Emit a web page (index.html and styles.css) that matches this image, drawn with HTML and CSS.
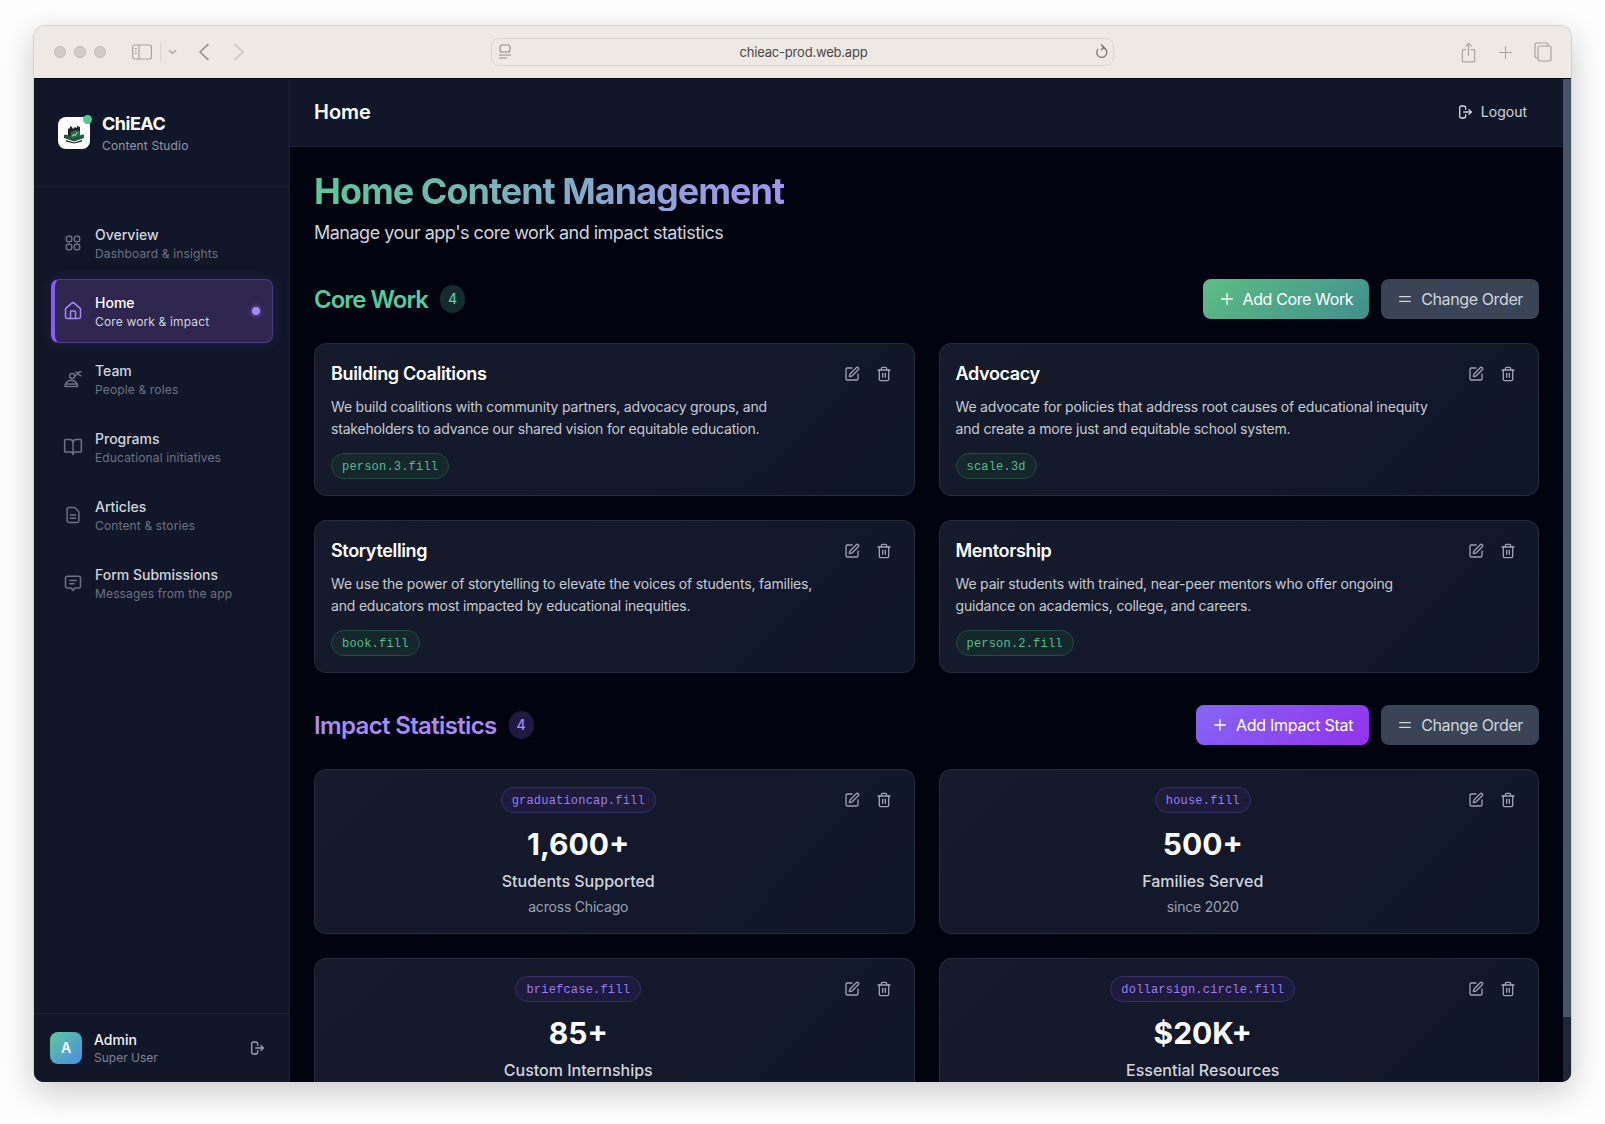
FILE: index.html
```html
<!DOCTYPE html>
<html>
<head>
<title>ChiEAC Content Studio</title>
<meta charset="UTF-8">
<link rel="stylesheet" href="styles.css">
</head>
<body>

<svg class="sprite" xmlns="http://www.w3.org/2000/svg">
	<symbol id="i-edit" viewBox="0 0 24 24"><path d="M12 3H5a2 2 0 0 0-2 2v14a2 2 0 0 0 2 2h14a2 2 0 0 0 2-2v-7"/><path d="M18.375 2.625a1 1 0 0 1 3 3l-9.013 9.014a2 2 0 0 1-.853.505l-2.873.84a.5.5 0 0 1-.62-.62l.84-2.873a2 2 0 0 1 .506-.852z"/></symbol>
	<symbol id="i-trash" viewBox="0 0 24 24"><path d="M3 6h18"/><path d="M19 6v14c0 1-1 2-2 2H7c-1 0-2-1-2-2V6"/><path d="M8 6V4c0-1 1-2 2-2h4c1 0 2 1 2 2v2"/><path d="M10 11v6"/><path d="M14 11v6"/></symbol>
	<symbol id="i-grid" viewBox="0 0 24 24"><rect x="4" y="4" width="6.5" height="6.5" rx="2"/><rect x="13.5" y="4" width="6.5" height="6.5" rx="2"/><rect x="4" y="13.5" width="6.5" height="6.5" rx="2"/><rect x="13.5" y="13.5" width="6.5" height="6.5" rx="2"/></symbol>
	<symbol id="i-home" viewBox="0 0 24 24"><path d="M15 21v-8a1 1 0 0 0-1-1h-4a1 1 0 0 0-1 1v8"/><path d="M3 10a2 2 0 0 1 .709-1.528l7-5.999a2 2 0 0 1 2.582 0l7 5.999A2 2 0 0 1 21 10v9a2 2 0 0 1-2 2H5a2 2 0 0 1-2-2z"/></symbol>
	<symbol id="i-team" viewBox="0 0 24 24"><circle cx="11" cy="8.500" r="3"/><path d="M2.500 21c0-4.500 3.500-7.500 7.500-7.500s7.500 3 7.500 7.500z"/><path d="M3 18h14"/><path d="M14.500 8c2-.5 3-2 4-3.500.6-.9 1.500-1.300 3-1.300"/><path d="M15.500 4c1.500 0 2.500 1 3.500 2.500.7 1 1.500 1.500 2.500 1.500"/></symbol>
	<symbol id="i-book" viewBox="0 0 24 24"><path d="M12 7v14"/><path d="M3 18a1 1 0 0 1-1-1V4a1 1 0 0 1 1-1h5a4 4 0 0 1 4 4 4 4 0 0 1 4-4h5a1 1 0 0 1 1 1v13a1 1 0 0 1-1 1h-6a3 3 0 0 0-3 3 3 3 0 0 0-3-3z"/></symbol>
	<symbol id="i-file" viewBox="0 0 24 24"><path d="M14 3H7a2 2 0 0 0-2 2v14a2 2 0 0 0 2 2h10a2 2 0 0 0 2-2V8z"/><path d="M9 12h6"/><path d="M9 16h6"/></symbol>
	<symbol id="i-message" viewBox="0 0 24 24"><path d="M3 6a2 2 0 0 1 2-2h14a2 2 0 0 1 2 2v10a2 2 0 0 1-2 2h-5l-2 3-2-3H5a2 2 0 0 1-2-2z"/><path d="M8 9h8"/><path d="M8 13h5"/></symbol>
	<symbol id="i-logout" viewBox="0 0 24 24"><path d="M10 21H7a3 3 0 0 1-3-3V6a3 3 0 0 1 3-3h3a3 3 0 0 1 3 3v2"/><path d="M13 16v2a3 3 0 0 1-3 3"/><path d="M18 8.500l3.500 3.500-3.500 3.500"/><path d="M21 12H10"/></symbol>
	<symbol id="i-plus" viewBox="0 0 24 24"><path d="M12 4v16"/><path d="M4 12h16"/></symbol>
	<symbol id="i-order" viewBox="0 0 24 24"><path d="M4 8.500h16"/><path d="M4 15.500h16"/></symbol>
</svg>

<div class="window">

	<div class="toolbar">
		<div class="toolbar-left">
			<span class="light"></span><span class="light"></span><span class="light"></span>
			<svg class="tb-sidebar" viewBox="0 0 20 16"><rect x="0.600" y="1" width="18.800" height="14" rx="2"/><path d="M7 1v14"/><path d="M3 4.500h1.500M3 7h1.500M3 9.500h1.500"/></svg>
			<span class="tb-divider"></span>
			<svg class="tb-down" viewBox="0 0 10 6"><path d="M1.500 1.500 5 4.500l3.500-3"/></svg>
			<svg class="tb-back" viewBox="0 0 12 18"><path d="M10 1.500 2 9l8 7.500"/></svg>
			<svg class="tb-forward" viewBox="0 0 12 18"><path d="M2 1.500 10 9l-8 7.500"/></svg>
		</div>
		<div class="urlbar">
			<svg class="url-page" viewBox="0 0 14 16"><rect x="2" y="1" width="10" height="7" rx="2"/><path d="M1.500 11h11M1.500 14h7"/></svg>
			<span class="url-text">chieac-prod.web.app</span>
			<svg class="url-reload" viewBox="0 0 14 16"><path d="M8 3.500a5 5 0 1 1-5.300 2"/><path d="M6.500 .8 9 3.500 6.300 5.800"/></svg>
		</div>
		<div class="toolbar-right">
			<svg class="tb-share" viewBox="0 0 16 22"><path d="M5 8H2.500a1 1 0 0 0-1 1v11a1 1 0 0 0 1 1h11a1 1 0 0 0 1-1V9a1 1 0 0 0-1-1H11"/><path d="M8 14V1.500"/><path d="M5 4.200 8 1.200l3 3"/></svg>
			<svg class="tb-plus" viewBox="0 0 14 14"><path d="M7 0v14M0 7h14"/></svg>
			<svg class="tb-tabs" viewBox="0 0 18 20"><rect x="4" y="4" width="13" height="15" rx="2"/><path d="M4 16H3a2 2 0 0 1-2-2V3a2 2 0 0 1 2-2h9a2 2 0 0 1 2 2v1"/></svg>
		</div>
	</div>

	<div class="app">

		<aside class="sidebar">
			<div class="brand">
				<div class="logo">
					<svg viewBox="0 0 32 32">
						<path fill="#20232a" d="M10 21v-9l2-1v-2l2 1 1 2 2-2 2 1v-2l3 1v11z"/>
						<path fill="#2c6a4e" d="M12 21l1-6 4-2 5 1v7z"/>
						<path fill="#e8f0ea" d="M14 19l2-2 1 1 2-3 .6.6-2.500 3.400-1-1-1.500 1.500z"/>
						<path fill="#1f5a40" d="M6 18l2-.5 8 3.500 8-3.500 2 .5v3l-10 3.500-10-3.500z"/>
						<path fill="#17211d" d="M8 23l8 2.500 8-2.500v1.500l-8 2-8-2z"/>
					</svg>
					<span class="logo-dot"></span>
				</div>
				<div class="brand-text">
					<div class="brand-name">ChiEAC</div>
					<div class="brand-sub">Content Studio</div>
				</div>
			</div>

			<nav class="nav">
				<a class="nav-item">
					<svg class="nav-icon"><use href="#i-grid"/></svg>
					<div><div class="nav-title">Overview</div><div class="nav-sub">Dashboard &amp; insights</div></div>
				</a>
				<a class="nav-item active">
					<svg class="nav-icon"><use href="#i-home"/></svg>
					<div><div class="nav-title">Home</div><div class="nav-sub">Core work &amp; impact</div></div>
					<span class="nav-dot"></span>
				</a>
				<a class="nav-item">
					<svg class="nav-icon"><use href="#i-team"/></svg>
					<div><div class="nav-title">Team</div><div class="nav-sub">People &amp; roles</div></div>
				</a>
				<a class="nav-item">
					<svg class="nav-icon"><use href="#i-book"/></svg>
					<div><div class="nav-title">Programs</div><div class="nav-sub">Educational initiatives</div></div>
				</a>
				<a class="nav-item">
					<svg class="nav-icon"><use href="#i-file"/></svg>
					<div><div class="nav-title">Articles</div><div class="nav-sub">Content &amp; stories</div></div>
				</a>
				<a class="nav-item">
					<svg class="nav-icon"><use href="#i-message"/></svg>
					<div><div class="nav-title">Form Submissions</div><div class="nav-sub">Messages from the app</div></div>
				</a>
			</nav>

			<div class="user">
				<div class="avatar">A</div>
				<div class="user-text">
					<div class="user-name">Admin</div>
					<div class="user-role">Super User</div>
				</div>
				<svg class="user-logout"><use href="#i-logout"/></svg>
			</div>
		</aside>

		<div class="main">
			<header class="topbar">
				<h1 class="topbar-title">Home</h1>
				<button class="logout"><svg><use href="#i-logout"/></svg>Logout</button>
			</header>

			<div class="content">
				<div class="page-head">
					<h2 class="page-title">Home Content Management</h2>
					<p class="page-sub">Manage your app's core work and impact statistics</p>
				</div>

				<section class="section">
					<div class="section-head">
						<h3 class="section-title green">Core Work</h3>
						<span class="count green-count">4</span>
						<div class="section-buttons">
							<button class="btn btn-green"><svg><use href="#i-plus"/></svg>Add Core Work</button>
							<button class="btn btn-grey"><svg><use href="#i-order"/></svg>Change Order</button>
						</div>
					</div>
					<div class="card-grid">
						<div class="card">
							<div class="card-body">
								<div class="card-title">Building Coalitions</div>
								<p class="card-text">We build coalitions with community partners, advocacy groups, and stakeholders to advance our shared vision for equitable education.</p>
								<span class="tag tag-green">person.3.fill</span>
							</div>
							<div class="card-actions"><button><svg><use href="#i-edit"/></svg></button><button><svg><use href="#i-trash"/></svg></button></div>
						</div>
						<div class="card">
							<div class="card-body">
								<div class="card-title">Advocacy</div>
								<p class="card-text">We advocate for policies that address root causes of educational inequity and create a more just and equitable school system.</p>
								<span class="tag tag-green">scale.3d</span>
							</div>
							<div class="card-actions"><button><svg><use href="#i-edit"/></svg></button><button><svg><use href="#i-trash"/></svg></button></div>
						</div>
						<div class="card">
							<div class="card-body">
								<div class="card-title">Storytelling</div>
								<p class="card-text">We use the power of storytelling to elevate the voices of students, families, and educators most impacted by educational inequities.</p>
								<span class="tag tag-green">book.fill</span>
							</div>
							<div class="card-actions"><button><svg><use href="#i-edit"/></svg></button><button><svg><use href="#i-trash"/></svg></button></div>
						</div>
						<div class="card">
							<div class="card-body">
								<div class="card-title">Mentorship</div>
								<p class="card-text">We pair students with trained, near-peer mentors who offer ongoing guidance on academics, college, and careers.</p>
								<span class="tag tag-green">person.2.fill</span>
							</div>
							<div class="card-actions"><button><svg><use href="#i-edit"/></svg></button><button><svg><use href="#i-trash"/></svg></button></div>
						</div>
					</div>
				</section>

				<section class="section">
					<div class="section-head">
						<h3 class="section-title purple">Impact Statistics</h3>
						<span class="count purple-count">4</span>
						<div class="section-buttons">
							<button class="btn btn-purple"><svg><use href="#i-plus"/></svg>Add Impact Stat</button>
							<button class="btn btn-grey"><svg><use href="#i-order"/></svg>Change Order</button>
						</div>
					</div>
					<div class="card-grid">
						<div class="card">
							<div class="card-body stat">
								<span class="tag tag-purple">graduationcap.fill</span>
								<div class="stat-value">1,600+</div>
								<div class="stat-label">Students Supported</div>
								<div class="stat-note">across Chicago</div>
							</div>
							<div class="card-actions"><button><svg><use href="#i-edit"/></svg></button><button><svg><use href="#i-trash"/></svg></button></div>
						</div>
						<div class="card">
							<div class="card-body stat">
								<span class="tag tag-purple">house.fill</span>
								<div class="stat-value">500+</div>
								<div class="stat-label">Families Served</div>
								<div class="stat-note">since 2020</div>
							</div>
							<div class="card-actions"><button><svg><use href="#i-edit"/></svg></button><button><svg><use href="#i-trash"/></svg></button></div>
						</div>
						<div class="card">
							<div class="card-body stat">
								<span class="tag tag-purple">briefcase.fill</span>
								<div class="stat-value">85+</div>
								<div class="stat-label">Custom Internships</div>
							</div>
							<div class="card-actions"><button><svg><use href="#i-edit"/></svg></button><button><svg><use href="#i-trash"/></svg></button></div>
						</div>
						<div class="card">
							<div class="card-body stat">
								<span class="tag tag-purple">dollarsign.circle.fill</span>
								<div class="stat-value">$20K+</div>
								<div class="stat-label">Essential Resources</div>
							</div>
							<div class="card-actions"><button><svg><use href="#i-edit"/></svg></button><button><svg><use href="#i-trash"/></svg></button></div>
						</div>
					</div>
				</section>
			</div>
		</div>

		<div class="scrollbar"><div class="scroll-thumb"></div></div>
	</div>
</div>

</body>
</html>
```

FILE: styles.css
```css
html, body {
	height: 100%;
}

body {
	margin: 0;
	padding: 25px 33px 0 33px;
	box-sizing: border-box;
	background-color: #fdfdfd;
	font-family: "Inter", "Liberation Sans", sans-serif;
	overflow: hidden;
}

.sprite {
	display: none;
}

svg {
	fill: none;
	stroke: currentColor;
	stroke-width: 2;
	stroke-linecap: round;
	stroke-linejoin: round;
	flex-shrink: 0;
}

button {
	font-family: inherit;
	border: 0;
	background: none;
	cursor: pointer;
}

h1, h2, h3, p {
	margin: 0;
}

/* browser window */

.window {
	display: flex;
	flex-direction: column;
	height: 1056px;
	border: 1px solid #d3cfcb;
	border-bottom: 0;
	border-radius: 12px 12px 10px 10px;
	overflow: hidden;
	box-shadow: 0 10px 32px rgba(0, 0, 0, 0.2);
}

.toolbar {
	display: grid;
	grid-template-columns: 1fr 623px 1fr;
	align-items: center;
	height: 52px;
	flex-shrink: 0;
	background-color: #eee9e5;
	border-bottom: 1px solid #08090d;
	color: #a9a5a1;
}

.toolbar-left {
	display: flex;
	align-items: center;
	padding-left: 20px;
}

.light {
	width: 12px;
	height: 12px;
	box-sizing: border-box;
	margin-right: 8px;
	border-radius: 50%;
	background-color: #d0ccc8;
	border: 1px solid #bdb9b5;
}

.tb-sidebar {
	width: 20px;
	height: 16px;
	margin-left: 18px;
	stroke-width: 1.2;
}

.tb-divider {
	width: 1px;
	height: 18px;
	margin-left: 8px;
	background-color: #d8d4d0;
}

.tb-down {
	width: 9px;
	height: 6px;
	margin-left: 7px;
	stroke-width: 1.5;
}

.tb-back {
	width: 12px;
	height: 18px;
	margin-left: 21px;
	stroke-width: 1.6;
	color: #8f8b87;
}

.tb-forward {
	width: 12px;
	height: 18px;
	margin-left: 23px;
	stroke-width: 1.6;
	color: #c9c5c1;
}

.urlbar {
	display: flex;
	align-items: center;
	justify-content: space-between;
	height: 28px;
	box-sizing: border-box;
	padding: 0 4px 0 6px;
	border: 1px solid #d8d4d0;
	border-radius: 8px;
	background-color: #eee9e5;
}

.url-page {
	width: 14px;
	height: 16px;
	stroke-width: 1.1;
	color: #8f8b87;
}

.url-text {
	font-size: 13px;
	letter-spacing: -0.2px;
	color: #4b4845;
}

.url-reload {
	width: 14px;
	height: 16px;
	stroke-width: 1.3;
	color: #77736f;
}

.toolbar-right {
	display: flex;
	align-items: center;
	justify-content: flex-end;
	padding-right: 19px;
}

.tb-share {
	width: 15px;
	height: 21px;
	stroke-width: 1.3;
}

.tb-plus {
	width: 13px;
	height: 13px;
	margin-left: 23px;
	stroke-width: 1.2;
}

.tb-tabs {
	width: 18px;
	height: 20px;
	margin-left: 22px;
	stroke-width: 1.2;
}

/* app */

.app {
	display: flex;
	flex: 1;
	min-height: 0;
	background-color: #01030f;
}

.sidebar {
	display: flex;
	flex-direction: column;
	width: 256px;
	box-sizing: border-box;
	flex-shrink: 0;
	background-color: #111729;
	border-right: 1px solid #1d2333;
}

.brand {
	display: flex;
	align-items: center;
	gap: 12px;
	height: 108px;
	box-sizing: border-box;
	flex-shrink: 0;
	padding: 0 24px;
	border-bottom: 1px solid #1b2132;
}

.logo {
	position: relative;
	width: 32px;
	height: 32px;
	border-radius: 8px;
	background-color: #fff;
}

.logo svg {
	display: block;
	width: 32px;
	height: 32px;
	stroke: none;
}

.logo-dot {
	position: absolute;
	top: -2px;
	right: -2px;
	width: 9px;
	height: 9px;
	border-radius: 50%;
	background-color: #52c994;
}

.brand-text {
	margin-top: 1px;
}

.brand-name {
	font-size: 18px;
	line-height: 24px;
	font-weight: 700;
	letter-spacing: -0.5px;
	color: #fff;
}

.brand-sub {
	margin-top: 2px;
	font-size: 12px;
	line-height: 16px;
	letter-spacing: 0.15px;
	color: #9097a6;
}

.nav {
	display: flex;
	flex-direction: column;
	flex: 1;
	gap: 4px;
	padding: 24px 16px 0 17px;
}

.nav-item {
	display: flex;
	align-items: center;
	gap: 12px;
	height: 64px;
	box-sizing: border-box;
	flex-shrink: 0;
	padding: 0 16px 0 12px;
	border-radius: 8px;
}

.nav-icon {
	width: 20px;
	height: 20px;
	stroke-width: 1.8;
	color: #6b7280;
}

.nav-title {
	font-size: 14px;
	line-height: 20px;
	font-weight: 500;
	color: #d1d5db;
}

.nav-sub {
	margin-top: 1px;
	font-size: 12px;
	line-height: 16px;
	letter-spacing: 0.15px;
	color: #6b7280;
}

.nav-item.active {
	background-color: #2f2650;
	border: 1px solid #4b3a85;
	border-left: 4px solid #8b5cf6;
	padding-left: 8px;
	padding-right: 12px;
	box-shadow: 0 0 14px rgba(139, 92, 246, 0.14);
}

.active .nav-icon {
	color: #a78bfa;
}

.active .nav-title {
	color: #fff;
}

.active .nav-sub {
	color: #d1d5db;
}

.nav-dot {
	width: 8px;
	height: 8px;
	margin-left: auto;
	border-radius: 50%;
	background-color: #a78bfa;
	box-shadow: 0 0 5px rgba(167, 139, 250, 0.7);
}

.user {
	display: flex;
	align-items: center;
	gap: 12px;
	height: 69px;
	box-sizing: border-box;
	flex-shrink: 0;
	padding: 0 24px 0 16px;
	border-top: 1px solid #1d2333;
}

.avatar {
	width: 32px;
	height: 32px;
	border-radius: 8px;
	background: linear-gradient(135deg, #5fc69a, #4a8ee6);
	color: #fff;
	font-size: 14px;
	font-weight: 600;
	line-height: 32px;
	text-align: center;
}

.user-text {
	flex: 1;
}

.user-name {
	font-size: 14px;
	line-height: 20px;
	font-weight: 500;
	color: #f3f4f6;
}

.user-role {
	font-size: 12px;
	line-height: 16px;
	color: #7c8393;
}

.user-logout {
	width: 16px;
	height: 16px;
	color: #9ca3af;
}

/* main column */

.main {
	display: flex;
	flex-direction: column;
	flex: 1;
	min-width: 0;
}

.topbar {
	display: flex;
	align-items: center;
	justify-content: space-between;
	height: 68px;
	box-sizing: border-box;
	flex-shrink: 0;
	padding: 0 24px 2px 24px;
	background-color: #111729;
	border-bottom: 1px solid #1d2333;
}

.topbar-title {
	font-size: 20px;
	font-weight: 600;
	color: #fff;
}

.logout {
	display: flex;
	align-items: center;
	gap: 8px;
	padding: 8px 12px;
	font-size: 14px;
	line-height: 20px;
	color: #d1d5db;
}

.logout svg {
	width: 16px;
	height: 16px;
}

.content {
	flex: 1;
	min-height: 0;
	padding: 24px 24px 0 24px;
	overflow: hidden;
}

.page-head {
	margin-bottom: 32px;
}

.page-title {
	display: inline-block;
	font-size: 36px;
	line-height: 40px;
	font-weight: 700;
	letter-spacing: -1px;
	background: linear-gradient(90deg, #5bc796, #a195f0);
	-webkit-background-clip: text;
	background-clip: text;
	color: transparent;
}

.page-sub {
	margin-top: 8px;
	font-size: 18px;
	line-height: 28px;
	letter-spacing: -0.5px;
	color: #d1d5db;
}

.section {
	margin-bottom: 32px;
}

.section-head {
	display: flex;
	align-items: center;
	gap: 12px;
	margin-bottom: 24px;
}

.section-title {
	margin-top: 2px;
	font-size: 24px;
	line-height: 32px;
	font-weight: 600;
}

.green {
	letter-spacing: -1px;
	color: #54cba0;
}

.purple {
	letter-spacing: -0.65px;
	color: #a98bf8;
}

.count {
	width: 25px;
	height: 28px;
	border-radius: 14px;
	font-size: 14px;
	line-height: 28px;
	font-weight: 500;
	text-align: center;
}

.green-count {
	background-color: #152a2c;
	color: #54cba0;
}

.purple-count {
	background-color: #20193f;
	color: #a98bf8;
}

.section-buttons {
	display: flex;
	gap: 12px;
	margin-left: auto;
}

.btn {
	display: flex;
	align-items: center;
	gap: 8px;
	height: 40px;
	padding: 0 16px;
	border-radius: 8px;
	font-size: 16px;
	letter-spacing: -0.38px;
	color: #fff;
}

.btn svg {
	width: 16px;
	height: 16px;
}

.btn-green {
	background: linear-gradient(135deg, #5dbd85, #41908e);
}

.btn-purple {
	background: linear-gradient(135deg, #8466f5, #9333ea);
	letter-spacing: -0.25px;
}

.btn-grey {
	background-color: #394456;
	color: #d1d5db;
}

.card-grid {
	display: grid;
	grid-template-columns: 1fr 1fr;
	gap: 24px;
}

.card {
	display: flex;
	align-items: flex-start;
	gap: 12px;
	padding: 16px;
	border: 1px solid #262c3b;
	border-radius: 12px;
	background: linear-gradient(135deg, #161b2b, #10162a);
}

.card-body {
	flex: 1;
	min-width: 0;
}

.card-title {
	margin-bottom: 8px;
	font-size: 18px;
	line-height: 28px;
	font-weight: 600;
	letter-spacing: -0.35px;
	color: #fff;
}

.card-text {
	margin-bottom: 13px;
	font-size: 14px;
	line-height: 22px;
	letter-spacing: -0.19px;
	color: #c6cad2;
}

.card-actions {
	display: flex;
	gap: 4px;
}

.card-actions button {
	display: flex;
	padding: 6px;
	color: #9ca3af;
}

.card-actions svg {
	width: 16px;
	height: 16px;
}

.tag {
	display: block;
	width: fit-content;
	box-sizing: border-box;
	height: 26px;
	padding: 1px 10px 0 10px;
	border: 1px solid;
	border-radius: 13px;
	font-family: "Liberation Mono", "DejaVu Sans Mono", monospace;
	font-size: 12px;
	line-height: 24px;
	letter-spacing: 0.2px;
}

.tag-green {
	background-color: #14272b;
	border-color: #214a42;
	color: #54bd8f;
}

.tag-purple {
	margin: 0 auto;
	background-color: #1d1a3c;
	border-color: #362e66;
	color: #9a7df0;
}

.stat {
	padding-top: 1px;
	text-align: center;
}

.stat-value {
	margin-top: 13px;
	font-size: 30px;
	line-height: 36px;
	font-weight: 700;
	color: #fff;
}

.stat-label {
	margin-top: 7px;
	font-size: 16px;
	line-height: 24px;
	font-weight: 500;
	color: #d1d5db;
}

.stat-note {
	margin-top: 4px;
	font-size: 14px;
	line-height: 20px;
	letter-spacing: -0.2px;
	color: #9ca3af;
}

.scrollbar {
	width: 8px;
	flex-shrink: 0;
	background-color: #1e2534;
}

.scroll-thumb {
	height: 938px;
	background-color: #475366;
}
```
